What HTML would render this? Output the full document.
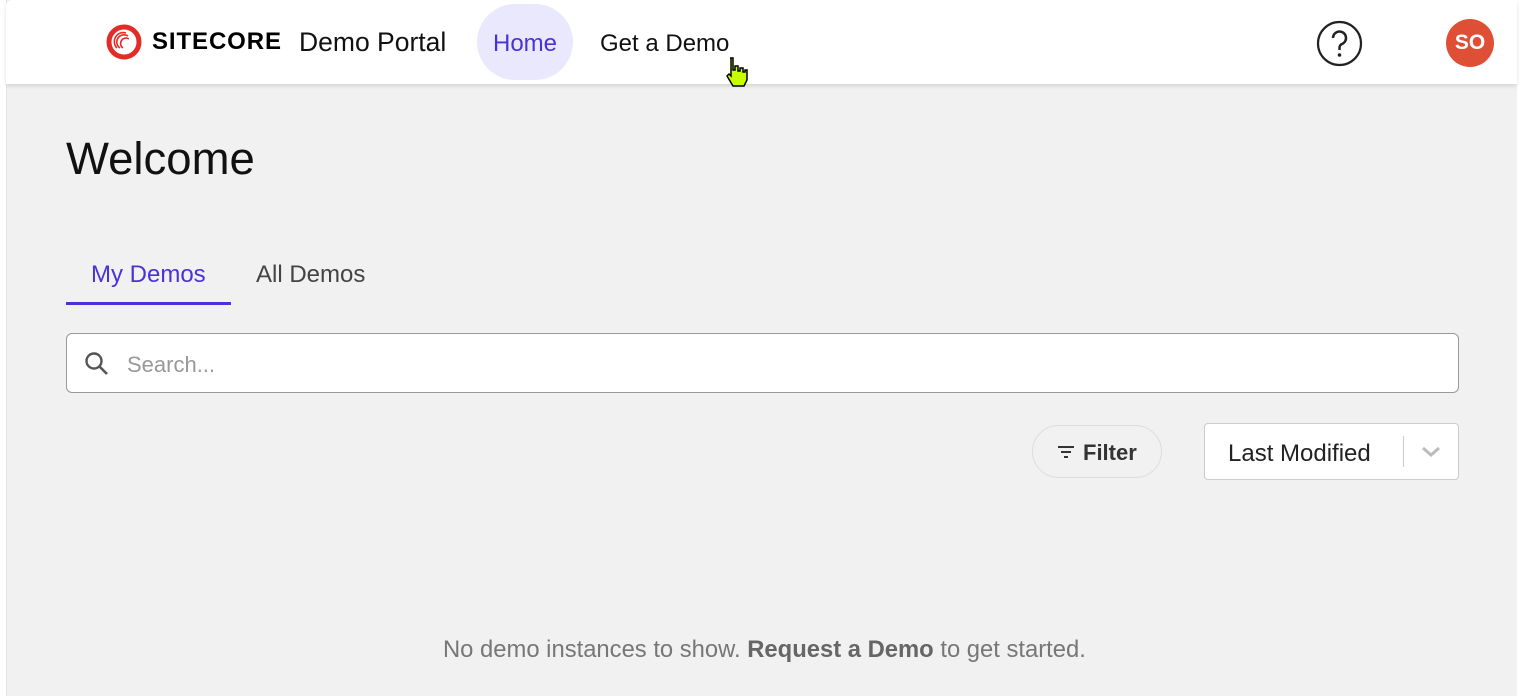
<!DOCTYPE html>
<html><head><meta charset="utf-8"><style>
*{box-sizing:border-box;margin:0;padding:0}
body{width:1523px;height:696px;overflow:hidden;background:#fff;font-family:"Liberation Sans",sans-serif;position:relative}
.main{position:absolute;left:6px;top:0;width:1511px;height:696px;background:#f1f1f1;border-left:1px solid #e4e4e4}
.hdr{position:absolute;left:6px;top:0;width:1511px;height:84px;background:#fff;box-shadow:0 2px 4px rgba(0,0,0,.12);border-radius:6px 0 0 0}
.abs{position:absolute;white-space:nowrap}
</style></head><body>
<div class="main"></div>
<div class="hdr"></div>
<svg class="abs" style="left:106px;top:24px" width="36" height="36" viewBox="0 0 36 36"><circle cx="18" cy="18" r="15" fill="none" stroke="#e42c26" stroke-width="5"/><path d="M11 24 A9 9 0 0 1 20 9 M14 24 A7 7 0 0 1 22 12 M17 24 A5 5 0 0 1 23 15" fill="none" stroke="#e42c26" stroke-width="1.6"/></svg>
<div class="abs" style="left:152px;top:28px;font-size:24px;font-weight:bold;letter-spacing:0.9px">SITECORE</div>
<div class="abs" style="left:299px;top:27px;font-size:26.5px;color:#111">Demo Portal</div>
<div class="abs" style="left:477px;top:4px;width:96px;height:76px;border-radius:38px;background:#e9e8fc"></div>
<div class="abs" style="left:493px;top:30px;font-size:24px;color:#4a32d8">Home</div>
<div class="abs" style="left:600px;top:30px;font-size:24px;color:#111">Get a Demo</div>
<svg class="abs" style="left:724px;top:56px" width="26" height="34" viewBox="0 0 26 34"><path d="M6 2h3v12h2V10h3v5h2v-3h3v4h2v-2h2v10l-3 6H9L3 20l2-2 2 2V2z" fill="#c8ff00" stroke="#000" stroke-width="1.5"/></svg>
<svg class="abs" style="left:1316px;top:20px" width="47" height="47" viewBox="0 0 47 47"><circle cx="23.5" cy="23.5" r="21.5" fill="none" stroke="#222" stroke-width="2.2"/><path d="M17 18a6.5 6.5 0 1 1 9 6c-2 1-2.5 2-2.5 4v2" fill="none" stroke="#222" stroke-width="2.5"/><circle cx="23.5" cy="35" r="1.8" fill="#222"/></svg>
<div class="abs" style="left:1446px;top:19px;width:48px;height:48px;border-radius:50%;background:#df4f35;color:#fff;font-weight:bold;font-size:21px;line-height:48px;text-align:center">SO</div>
<div class="abs" style="left:66px;top:133px;font-size:45.5px;color:#111">Welcome</div>
<div class="abs" style="left:91px;top:261px;font-size:24px;color:#4a32d8">My Demos</div>
<div class="abs" style="left:66px;top:302px;width:165px;height:3px;background:#4a32d8"></div>
<div class="abs" style="left:256px;top:261px;font-size:24px;color:#444">All Demos</div>
<div class="abs" style="left:66px;top:333px;width:1393px;height:60px;background:#fff;border:1px solid #999;border-radius:6px"></div>
<svg class="abs" style="left:84px;top:351px" width="26" height="26" viewBox="0 0 26 26"><circle cx="10" cy="10" r="7.5" fill="none" stroke="#555" stroke-width="2.4"/><path d="M15.5 15.5L23 23" stroke="#555" stroke-width="2.6"/></svg>
<div class="abs" style="left:127px;top:352px;font-size:22px;color:#999">Search...</div>
<div class="abs" style="left:1032px;top:425px;width:130px;height:53px;border:1px solid #ddd;border-radius:27px"></div>
<svg class="abs" style="left:1057px;top:445px" width="18" height="14" viewBox="0 0 18 14"><path d="M1 2h16M4 7h10M7 12h4" stroke="#333" stroke-width="2"/></svg>
<div class="abs" style="left:1083px;top:440px;font-size:22px;font-weight:bold;color:#333">Filter</div>
<div class="abs" style="left:1204px;top:423px;width:255px;height:57px;background:#fff;border:1px solid #ccc;border-radius:4px"></div>
<div class="abs" style="left:1228px;top:440px;font-size:24px;color:#222">Last Modified</div>
<div class="abs" style="left:1403px;top:436px;width:1px;height:31px;background:#ccc"></div>
<svg class="abs" style="left:1421px;top:446px" width="20" height="12" viewBox="0 0 20 12"><path d="M2 2l8 7 8-7" fill="none" stroke="#bbb" stroke-width="3"/></svg>
<div class="abs" style="left:443px;top:636px;font-size:23.8px;color:#777">No demo instances to show. <b style="color:#666">Request a Demo</b> to get started.</div>
</body></html>
